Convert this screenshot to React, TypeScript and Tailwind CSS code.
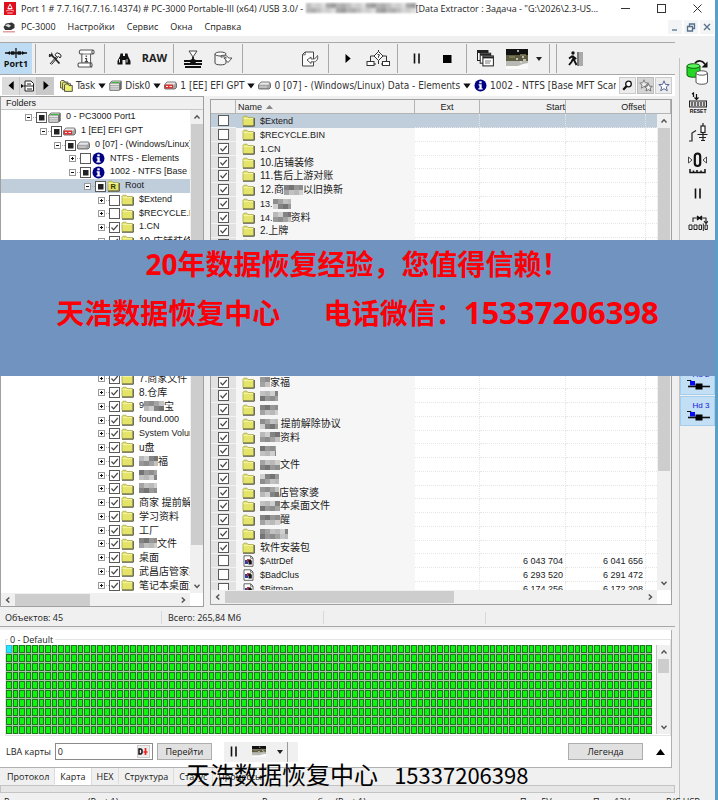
import { useEffect, useRef } from "react";
import type { ReactNode } from "react";
import clsx from "clsx";

type CheckState = "on" | "off" | "mixed";
type Part = string | number;

interface TreeNode {
  level: number;
  label: Part[];
  check: CheckState;
  icon: "drive" | "ee" | "disk" | "info" | "root" | "folder";
  open?: boolean;
  selected?: boolean;
}

interface FileRow {
  name: Part[];
  checked: boolean;
  kind: "folder" | "file";
  start?: string;
  offset?: string;
}

const INDENTS = ["pl-[24px]", "pl-[39px]", "pl-[53px]", "pl-[68px]", "pl-[83px]", "pl-[97px]"];

// A number inside a label is the width of a masked stretch
const folder = (...label: Part[]): TreeNode => ({ level: 5, label, check: "on", icon: "folder" });

const tree: TreeNode[] = [
  { level: 0, label: ["0 - PC3000 Port1"], check: "mixed", icon: "drive", open: true },
  { level: 1, label: ["1 [EE] EFI GPT"], check: "mixed", icon: "ee", open: true },
  { level: 2, label: ["0 [07] - (Windows/Linux) Data"], check: "mixed", icon: "disk", open: true },
  { level: 3, label: ["NTFS - Elements"], check: "off", icon: "info" },
  { level: 3, label: ["1002 - NTFS [Base MFT Scan]"], check: "mixed", icon: "info", open: true },
  { level: 4, label: ["Root"], check: "mixed", icon: "root", open: true, selected: true },
  { level: 5, label: ["$Extend"], check: "off", icon: "folder" },
  { level: 5, label: ["$RECYCLE.BIN"], check: "off", icon: "folder" },
  folder("1.CN"),
  folder("10.店铺装修"),
  folder("11.售后上游对账"),
  folder("12.商", 19, "以旧换新"),
  folder("13.", 18),
  folder("14.", 18, "资料"),
  folder("2.上牌"),
  folder("3.", 18),
  folder("4.", 18),
  folder("5.", 18),
  folder("6.", 18),
  folder("7.商家文件"),
  folder("8.仓库"),
  folder("9", 20, "宝"),
  folder("found.000"),
  folder("System Volume Information"),
  folder("u盘"),
  folder(19, "福"),
  folder(18),
  folder(18),
  folder("商家 提前解除协议"),
  folder("学习资料"),
  folder("工厂"),
  folder(18, "文件"),
  folder("桌面"),
  folder("武昌店管家婆"),
  folder("笔记本桌面文件"),
];

const dir = (...name: Part[]): FileRow => ({ name, checked: true, kind: "folder" });

const files: FileRow[] = [
  { name: ["$Extend"], checked: false, kind: "folder" },
  { name: ["$RECYCLE.BIN"], checked: false, kind: "folder" },
  dir("1.CN"),
  dir("10.店铺装修"),
  dir("11.售后上游对账"),
  dir("12.商", 19, "以旧换新"),
  dir("13.", 18),
  dir("14.", 18, "资料"),
  dir("2.上牌"),
  dir("3.", 18),
  dir("4.", 18),
  dir("5.", 18),
  dir("6.", 18),
  dir("7.商家文件"),
  dir("8.仓库"),
  dir("9", 20, "宝"),
  dir("found.000"),
  dir("System Volume Information"),
  dir("u盘"),
  dir(10, "家福"),
  dir(18),
  dir(18),
  dir(18, " 提前解除协议"),
  dir(20, "资料"),
  dir(16),
  dir(20, "文件"),
  dir(19),
  dir(19, "店管家婆"),
  dir(20, "本桌面文件"),
  dir(20, "醒"),
  dir(28),
  dir("软件安装包"),
  { name: ["$AttrDef"], checked: false, kind: "file", start: "6 043 704", offset: "6 041 656" },
  { name: ["$BadClus"], checked: false, kind: "file", start: "6 293 520", offset: "6 291 472" },
  { name: ["$Bitmap"], checked: false, kind: "file", start: "6 174 256", offset: "6 172 208" },
];

const SHADES = ["#8d8d8d", "#b9b9b9", "#747474", "#a3a3a3", "#cfcfcf", "#989898", "#c2c2c2", "#838383"];

function Mosaic({ width, seed = 0 }: { width: number; seed?: number }) {
  const cols = Math.ceil(width / 5);
  return (
    <svg width={width} height="11" viewBox={`0 0 ${width} 11`} className="shrink-0" aria-hidden="true">
      {Array.from({ length: cols * 2 }, (_, i) => (
        <rect
          key={i}
          x={(i % cols) * 5}
          y={Math.floor(i / cols) * 5}
          width="5"
          height="5"
          fill={SHADES[(i * 3 + seed) % SHADES.length]}
        />
      ))}
    </svg>
  );
}

const HAN = /[\u4e00-\u9fff]/;

function Label({ parts, seed }: { parts: Part[]; seed: number }) {
  return (
    <span className="flex items-center whitespace-pre">
      {parts.map((p, i) =>
        typeof p === "number" ? (
          <Mosaic key={i} width={p} seed={seed} />
        ) : (
          <span key={i} className={HAN.test(p) ? "text-[10px]" : "text-[9px]"}>{p}</span>
        )
      )}
    </span>
  );
}

function CheckBox({ state, label }: { state: CheckState; label: string }) {
  const ref = useRef<HTMLInputElement>(null);
  useEffect(() => {
    if (ref.current) ref.current.indeterminate = state === "mixed";
  }, [state]);

  return (
    <span className="grid h-[11px] w-[11px] shrink-0">
      <input
        ref={ref}
        type="checkbox"
        defaultChecked={state === "on"}
        aria-label={label}
        className="peer col-start-1 row-start-1 h-[11px] w-[11px] appearance-none border border-[#5a5a5a] bg-white"
      />
      <svg
        viewBox="0 0 11 11"
        className="pointer-events-none invisible col-start-1 row-start-1 h-[11px] w-[11px] peer-checked:visible"
      >
        <path d="M2.5 5.5 4.6 7.8 8.8 3" fill="none" stroke="#444" strokeWidth="1.2" />
      </svg>
      <svg
        viewBox="0 0 11 11"
        className="pointer-events-none invisible col-start-1 row-start-1 h-[11px] w-[11px] peer-indeterminate:visible"
      >
        <rect x="3" y="3" width="5.5" height="5.5" fill="#222" />
      </svg>
    </span>
  );
}

function FolderIcon({ root }: { root?: boolean }) {
  return (
    <svg width="13" height="12" viewBox="0 0 13 12" className="shrink-0">
      <path d="M1 10.5V2.2L2 1.2H5L6 2.5H11.5V10.5Z" fill="#e4e46a" stroke="#a8a850" strokeWidth=".8" />
      <path d="M1.5 3.6H11" stroke="#f8f8b4" strokeWidth=".8" />
      <path d="M1 11.2H12.3V3" fill="none" stroke="#4a4a30" strokeWidth="1" />
      {root && (
        <text x="3.6" y="9.3" fontSize="7.5" fontWeight="bold" fontFamily="Liberation Sans" fill="#333300">
          R
        </text>
      )}
    </svg>
  );
}

function DriveIcon({ kind }: { kind: "drive" | "ee" | "disk" }) {
  if (kind === "drive") {
    return (
      <svg width="13" height="11" viewBox="0 0 13 11" className="shrink-0">
        <path d="M3 1H12.2V9L10 10.3H.8V3Z" fill="#a8a8a8" stroke="#555" strokeWidth=".8" />
        <path d="M1.2 4.6H10M1.2 6.8H10M1.2 9H10" stroke="#eee" />
        <path d="M3.2 1.5H11.6L10.2 3.2H1.6Z" fill="#c8e4c8" />
        <path d="M2.4 2.6H10.6" stroke="#3cae3c" />
        <path d="M10.3 3.2V10L12.2 8.8V1.5Z" fill="#666" />
      </svg>
    );
  }
  return (
    <svg width="13" height="9" viewBox="0 0 13 9" className="shrink-0">
      <path d="M3 1H11.5L12.5 3V6.5L11 8H1L.5 7.5V4Z" fill="#a4a4a4" stroke="#555" strokeWidth=".8" />
      <path d="M3 1.4H11.5L10.4 3.8H1.2Z" fill="#e8e8e8" />
      {kind === "ee" ? (
        <rect x="1" y="3.5" width="8" height="4" fill="#d33" />
      ) : (
        <path d="M1.4 6H9" stroke="#ddd" />
      )}
      {kind === "ee" && <path d="M2 5.5H4M5.5 5.5H8" stroke="#fff" strokeWidth=".9" />}
    </svg>
  );
}

function InfoIcon() {
  return (
    <svg width="13" height="13" viewBox="0 0 13 13" className="shrink-0">
      <circle cx="6.5" cy="6.5" r="6" fill="#000084" />
      <rect x="5.3" y="2.3" width="2.4" height="2" fill="#fff" />
      <path d="M4.6 5.3H7.7V9.2H8.6V10.4H4.4V9.2H5.4V6.4H4.6Z" fill="#fff" />
    </svg>
  );
}

function FileIcon() {
  return (
    <svg width="13" height="12" viewBox="0 0 13 12" className="shrink-0">
      <path d="M2 .8H8.8L11 3V11.3H2Z" fill="#fff" stroke="#555" strokeWidth=".9" />
      <path d="M8.6 1V3.2H11" fill="none" stroke="#555" strokeWidth=".8" />
      <rect x="3" y="5" width="3" height="4" fill="#2c3ea8" />
      <rect x="5" y="4" width="2.4" height="3" fill="#c33" />
      <path d="M6.5 9.5V5L8.5 4.2 9.8 6V9.5Z" fill="#161616" />
    </svg>
  );
}

function Expander({ open }: { open?: boolean }) {
  return (
    <svg width="11" height="9" viewBox="0 0 11 9" className="shrink-0">
      <path d="M8 4.5H11" stroke="#aaa" strokeDasharray="1 1" />
      <rect x=".5" y="1.5" width="6" height="6" fill="#fff" stroke="#9a9a9a" />
      <path d={open ? "M2 4.5H5" : "M2 4.5H5M3.5 3V6"} stroke="#111" />
    </svg>
  );
}

function NodeIcon({ icon }: { icon: TreeNode["icon"] }) {
  if (icon === "info") return <InfoIcon />;
  if (icon === "folder" || icon === "root") return <FolderIcon root={icon === "root"} />;
  return <DriveIcon kind={icon} />;
}

function Caret() {
  return (
    <svg width="8" height="6" viewBox="0 0 8 6" className="shrink-0">
      <path d="M.3.6H7.7L4 5.4Z" fill="#111" />
    </svg>
  );
}

const CHEVRONS = {
  up: "M1.5 5.5 4 2.8 6.5 5.5",
  down: "M1.5 2.8 4 5.5 6.5 2.8",
  left: "M5.3 1.5 2.6 4 5.3 6.5",
  right: "M2.8 1.5 5.5 4 2.8 6.5",
};

function ScrollArrow({ to }: { to: keyof typeof CHEVRONS }) {
  return (
    <button type="button" aria-label={`Scroll ${to}`} className="grid h-[14px] w-[14px] shrink-0 place-items-center">
      <svg width="8" height="8" viewBox="0 0 8 8">
        <path d={CHEVRONS[to]} fill="none" stroke="#555" strokeWidth="1.5" />
      </svg>
    </button>
  );
}

function ToolButton({ label, children }: { label: string; children: ReactNode }) {
  return (
    <button
      type="button"
      aria-label={label}
      className="flex h-[30px] w-[31px] shrink-0 items-center justify-center"
    >
      {children}
    </button>
  );
}

function Separator() {
  return (
    <div className="flex h-[29px] w-[7px] shrink-0 justify-center">
      <div className="w-px bg-[#a8a8a8]" />
    </div>
  );
}

function PauseIcon() {
  return (
    <svg width="8" height="11" viewBox="0 0 8 11">
      <path d="M1.5.5V10.5M6 .5V10.5" stroke="#111" strokeWidth="1.6" />
    </svg>
  );
}

function PictureIcon({ className }: { className: string }) {
  return (
    <svg viewBox="0 0 22 20" className={className} preserveAspectRatio="none">
      <rect width="22" height="20" fill="#fafafa" />
      <rect width="22" height="6" fill="#111" />
      <rect y="6" width="22" height="6" fill="#5e5c40" />
      <path d="M0 12H22V14L17 15 12 17H0Z" fill="#b9b9b4" />
      <path d="M11 2H13M16 8H18M14 13H16M17 11H20M10 10H12" stroke="#ddd" strokeWidth="1.6" />
      <path d="M3 8H9M14 6H20" stroke="#85835c" strokeWidth="1.4" />
    </svg>
  );
}

function TitleBar() {
  return (
    <header className="flex h-[17px] items-center bg-white pl-1 text-[#222]">
      <svg width="12" height="13" viewBox="0 0 12 13" className="shrink-0">
        <rect width="12" height="13" fill="#e00f1e" />
        <path d="M3.8 6.5 6 2.2 8.2 6.5Z" fill="none" stroke="#fff" strokeWidth="1" />
        <path d="M2 9.2C4 7.5 8 7.5 10 9.2M3.3 11H8.7" fill="none" stroke="#ffc9cc" strokeWidth="1" />
      </svg>
      <h1 className="flex min-w-0 flex-1 items-center overflow-hidden pl-[5px] font-['Open_Sans',sans-serif] text-[9px] whitespace-pre">
        Port 1 # 7.7.16(7.7.16.14374) # PC-3000 Portable-III (x64) /USB 3.0/ -{" "}
        <span className="opacity-70 blur-[1px]">
          <Mosaic width={110} seed={3} />
        </span>
        {"  "}[Data Extractor : Задача - "G:\2026\2.3-US...
      </h1>
      <div className="flex">
        <button type="button" aria-label="Minimize" className="grid h-4 w-9 place-items-center">
          <svg width="9" height="9" viewBox="0 0 9 9"><path d="M0 4.5H9" stroke="#333" /></svg>
        </button>
        <button type="button" aria-label="Maximize" className="grid h-4 w-9 place-items-center">
          <svg width="9" height="9" viewBox="0 0 9 9"><rect x=".5" y=".5" width="8" height="8" fill="none" stroke="#333" /></svg>
        </button>
        <button type="button" aria-label="Close" className="grid h-4 w-9 place-items-center">
          <svg width="9" height="9" viewBox="0 0 9 9"><path d="M.5.5 8.5 8.5M8.5.5.5 8.5" stroke="#333" /></svg>
        </button>
      </div>
    </header>
  );
}

function MenuBar() {
  return (
    <nav className="flex h-[19px] items-center gap-3 bg-white pl-[3px] font-['Open_Sans',sans-serif] text-[9px] text-[#222]">
      <span className="flex items-center gap-[6px]">
        <svg width="12" height="12" viewBox="0 0 12 12">
          <path d="M.5 6 3 2.5 9 1.5 11.5 3.5V7L8 9H2Z" fill="#333" />
          <path d="M2 4.5 5 3 8 4.5 6 6.5Z" fill="#ddd" />
          <path d="M0 10.8H12" stroke="#d88" strokeWidth="1.2" />
        </svg>
        <button type="button">PC-3000</button>
      </span>
      <button type="button">Настройки</button>
      <button type="button">Сервис</button>
      <button type="button">Окна</button>
      <button type="button">Справка</button>
      <div className="ml-auto flex gap-[2px] pr-px">
        {["M2 8H7", "M1.5 4.5H6.5V9H1.5ZM3.5 4.5V2H8.5V6.5H6.5", "M2 2 8 8M8 2 2 8"].map((d) => (
          <button key={d} type="button" aria-label="Child window" className="grid h-[14px] w-[14px] place-items-center bg-[#f2f4f6]">
            <svg width="10" height="10" viewBox="0 0 10 10"><path d={d} fill="none" stroke="#56708c" strokeWidth="1.3" /></svg>
          </button>
        ))}
      </div>
    </nav>
  );
}

function Toolbar() {
  return (
    <div className="mt-[6px] flex h-[33px] items-center border-y border-[#a8a8a8]">
      <button
        type="button"
        className="flex h-[31px] w-8 shrink-0 flex-col items-center justify-center bg-[#bddcf4] font-['Open_Sans',sans-serif] text-[9px] leading-[11px] font-bold text-[#111]"
      >
        <svg width="22" height="10" viewBox="0 0 22 10">
          <path d="M0 5H22M11 0V10" stroke="#111" strokeWidth="1.3" />
          <path d="M2 5 5 3V7ZM20 5 17 3V7Z" fill="#111" />
          <rect x="6" y="3.3" width="3.5" height="3.4" fill="#111" />
          <rect x="12.5" y="3.3" width="3.5" height="3.4" fill="#111" />
        </svg>
        Port1
      </button>
      <Separator />
      <ToolButton label="Tools">
        <svg width="14" height="13" viewBox="0 0 14 13">
          <path d="M2 12 8.5 4.5M3.5 12.5 9.5 5.5" stroke="#222" />
          <path d="M7 2.5 9 .8 12 2 13.2 4 12 6 10.5 4.2 9 5.5Z" fill="#fff" stroke="#222" />
          <path d="M1 4.5 3.5 3 5.5 5 11.5 11.5" fill="none" stroke="#222" strokeWidth="1.8" />
          <path d="M1 2.2 2.8 3.2M3.6.6 4.2 3" stroke="#222" />
        </svg>
      </ToolButton>
      <ToolButton label="Script">
        <svg width="18" height="19" viewBox="0 0 18 19">
          <path d="M3.5 1H16C14.5 1.5 14.5 4.5 16 5H13.5V14M3.5 1C1.8 1.5 1.8 4.5 3.5 5H5V14M16 1C17.5 1.5 17.5 4.5 16 5" fill="#fff" stroke="#555" strokeWidth="1.1" />
          <path d="M5 5H13.5V14H5Z" fill="#fafafa" stroke="#555" strokeWidth=".8" />
          <path d="M2 14H14C12.8 15 12.8 17 14 18H2C.6 17 .6 15 2 14ZM14 14C15.5 15 15.5 17 14 18" fill="#fff" stroke="#555" strokeWidth="1.1" />
          <path d="M9.3 6.5V8M8 9.5H9.5V12.5M7.8 12.7H11" fill="none" stroke="#444" strokeWidth="1.2" />
        </svg>
      </ToolButton>
      <Separator />
      <ToolButton label="Find">
        <svg width="14" height="12" viewBox="0 0 14 12">
          <path d="M3.5.5H6V3H8V.5H10.5L11 3 13.5 8V11.5H8.5V7H5.5V11.5H.5V8L3 3Z" fill="#111" />
          <path d="M2.5 6V9.5M10 6V9.5" stroke="#ddd" />
        </svg>
      </ToolButton>
      <ToolButton label="Raw recovery">
        <span className="font-['Open_Sans',sans-serif] text-[11px] font-bold text-[#222]">RAW</span>
      </ToolButton>
      <Separator />
      <ToolButton label="Map">
        <svg width="18" height="18" viewBox="0 0 18 18">
          <path d="M5 1H13L9 7Z" fill="#fff" stroke="#444" />
          <path d="M9 7V10M0 11H6L9 9.5 12 11H18M0 14H18M1 17H17" fill="none" stroke="#111" strokeWidth="1.8" />
          <path d="M5 10H13L11 14H7Z" fill="#111" />
        </svg>
      </ToolButton>
      <ToolButton label="Image">
        <svg width="19" height="15" viewBox="0 0 19 15">
          <path d="M1 3V12C1 14.5 12 14.5 12 12V8" fill="#f5f5f5" stroke="#444" />
          <ellipse cx="6.5" cy="3" rx="5.5" ry="2" fill="#fff" stroke="#444" />
          <path d="M7 4.8C10 3.8 13 4 14.5 7H18L14 11.5 10 7H12.5C11.5 5.6 9 5.5 7 6.2Z" fill="#fff" stroke="#444" strokeWidth=".9" />
        </svg>
      </ToolButton>
      <Separator />
      <div className="w-12 shrink-0" />
      <ToolButton label="Export">
        <svg width="18" height="16" viewBox="0 0 18 16">
          <path d="M4 1H12.5V15H1.5V3.5Z" fill="#fafafa" stroke="#444" />
          <path d="M1.5 3.8H4.2V1" fill="none" stroke="#444" strokeWidth=".8" />
          <path d="M6 9 10 6V8H12.5C14.5 8 15.5 6 16.5 4.5 17.5 8 15.5 10.8 12.5 10.8H10V12.5Z" fill="#fff" stroke="#444" strokeWidth=".9" />
        </svg>
      </ToolButton>
      <Separator />
      <ToolButton label="Start">
        <svg width="6" height="9" viewBox="0 0 6 9"><path d="M.5 0 5.7 4.5.5 9Z" fill="#000" /></svg>
      </ToolButton>
      <ToolButton label="Algorithm">
        <svg width="25" height="17" viewBox="0 0 25 17">
          <path d="M12.5 1.5 17 6 12.5 10.5 8 6Z" fill="#fff" stroke="#333" />
          <path d="M12.5 0V2M8 6H4.5V11M17 6H20.5V11M7 14H10M15 14H18M12.5 14V10.5" fill="none" stroke="#333" />
          <rect x="1" y="11.5" width="7" height="4" fill="#fff" stroke="#333" />
          <rect x="16.5" y="11.5" width="7" height="4" fill="#fff" stroke="#333" />
          <path d="M11.5 4.5H13.2V6H12.5V7.8" fill="none" stroke="#333" strokeWidth=".9" />
        </svg>
      </ToolButton>
      <Separator />
      <ToolButton label="Pause"><PauseIcon /></ToolButton>
      <ToolButton label="Stop">
        <svg width="9" height="8" viewBox="0 0 9 8"><rect width="8.5" height="8" fill="#000" /></svg>
      </ToolButton>
      <Separator />
      <ToolButton label="Windows">
        <svg width="17" height="17" viewBox="0 0 17 17">
          {[0, 2.7, 5.4].map((o) => (
            <g key={o}>
              <rect x={0.5 + o} y={0.5 + o} width="10.5" height="10" fill="#fff" stroke="#222" />
              <path d={`M${0.5 + o} ${2 + o}H${11 + o}`} stroke="#222" strokeWidth="2" />
            </g>
          ))}
          <path d="M8 11H14M8 13H13" stroke="#555" strokeWidth=".8" />
        </svg>
      </ToolButton>
      <ToolButton label="View"><PictureIcon className="h-5 w-[22px]" /></ToolButton>
      <button type="button" aria-label="View options" className="grid h-[30px] w-[14px] shrink-0 place-items-center">
        <svg width="6" height="4" viewBox="0 0 6 4"><path d="M0 0H6L3 4Z" fill="#222" /></svg>
      </button>
      <Separator />
      <Separator />
      <ToolButton label="Exit">
        <svg width="16" height="16" viewBox="0 0 16 16">
          <circle cx="5" cy="2" r="1.7" fill="#111" />
          <path d="M4.5 4.5 6 9 8.5 14M5 8 3.5 11 1 14M4.5 5 1 7.5M5 5.5 8.2 8" stroke="#111" strokeWidth="1.9" />
          <path d="M10 1V15" stroke="#444" strokeWidth="1.4" />
          <rect x="11" y="1" width="4" height="14" fill="#aaa" />
        </svg>
      </ToolButton>
    </div>
  );
}

function Crumb({ icon, children, last }: { icon: ReactNode; children: ReactNode; last?: boolean }) {
  return (
    <button type="button" className={clsx("flex items-center gap-[3px]", last ? "min-w-0 overflow-hidden" : "shrink-0")}>
      {icon}
      <span className="whitespace-nowrap">{children}</span>
      {!last && <Caret />}
    </button>
  );
}

function PathBar() {
  return (
    <div className="flex h-[21px] items-center bg-white pr-[3px] pl-[2px]">
      <div className="flex shrink-0 bg-[#dcdcdc]">
        <button type="button" aria-label="Back" className="grid h-[18px] w-[17px] place-items-center">
          <svg width="6" height="9" viewBox="0 0 6 9"><path d="M5.7 0 .5 4.5 5.7 9Z" fill="#000" /></svg>
        </button>
        <button type="button" aria-label="History" className="grid h-[18px] w-[18px] place-items-center border-x border-[#c4c4c4]">
          <svg width="14" height="12" viewBox="0 0 14 12">
            <path d="M4 1H10L12.5 3.5V11H4Z" fill="#fff" stroke="#222" />
            <path d="M0 4 3 6 0 8Z" fill="#000" />
            <path d="M3 6H13M6 4H10M6 9H11" stroke="#222" strokeWidth="1.2" />
          </svg>
        </button>
        <button type="button" aria-label="Forward" className="grid h-[18px] w-[17px] place-items-center bg-[#c9c9c9]">
          <svg width="6" height="9" viewBox="0 0 6 9"><path d="M.5 0 5.7 4.5.5 9Z" fill="#000" /></svg>
        </button>
      </div>
      <div className="ml-[6px] flex min-w-0 flex-1 items-center gap-[3px] overflow-hidden font-['DejaVu_Sans_Condensed','DejaVu_Sans',sans-serif] text-[10px] text-[#333]">
        <Crumb
          icon={
            <svg width="13" height="12" viewBox="0 0 13 12" className="shrink-0">
              <path d="M.5 8V1.5L1.5.5H4L5 2H8V8Z" fill="#e4e46a" stroke="#555" strokeWidth=".9" />
              <path d="M2.5 9.7V3.2L3.5 2.2H6L7 3.7H10.5V9.7Z" fill="#e4e46a" stroke="#555" strokeWidth=".9" />
              <path d="M4.5 11.4V5L5.5 4H8L9 5.5H12.3V11.4Z" fill="#eeee70" stroke="#444" strokeWidth=".9" />
            </svg>
          }
        >
          Task
        </Crumb>
        <Crumb icon={<DriveIcon kind="drive" />}>Disk0</Crumb>
        <Crumb icon={<DriveIcon kind="ee" />}>1 [EE] EFI GPT</Crumb>
        <Crumb icon={<DriveIcon kind="disk" />}>0 [07] - (Windows/Linux) Data - Elements</Crumb>
        <Crumb icon={<InfoIcon />} last>1002 - NTFS [Base MFT Scan]</Crumb>
      </div>
      <div className="ml-[3px] flex shrink-0 gap-px">
        <button type="button" aria-label="Search" className="grid h-[17px] w-[17px] place-items-center border border-[#ccc] bg-[#ececec]">
          <svg width="11" height="11" viewBox="0 0 11 11">
            <circle cx="6.5" cy="4" r="2.8" fill="#fff" stroke="#111" strokeWidth="1.3" />
            <path d="M4.5 6.2 1.2 9.8" stroke="#111" strokeWidth="2.2" />
          </svg>
        </button>
        <button type="button" aria-label="Bookmarks" className="grid h-[17px] w-[17px] place-items-center border border-[#bbb] bg-[#d4d4d4]">
          <svg width="14" height="13" viewBox="0 0 14 13">
            <path d="M5 .8 6.2 3.8 9.3 4 6.9 6 7.7 9.2 5 7.5 2.3 9.2 3.1 6 .7 4 3.8 3.8Z" fill="#eee" stroke="#777" strokeWidth=".9" />
            <path d="M9.4 4.5 10.5 7.2 13.3 7.4 11.1 9.2 11.8 12 9.4 10.5 7 12 7.7 9.2 5.5 7.4 8.3 7.2Z" fill="#f5f5f5" stroke="#666" strokeWidth=".9" />
          </svg>
        </button>
        <button type="button" aria-label="Add bookmark" className="grid h-[17px] w-[17px] place-items-center border border-[#ccc] bg-[#ececec]">
          <svg width="12" height="12" viewBox="0 0 12 12">
            <path d="M6 .8 7.4 4.4 11.2 4.6 8.2 7 9.3 10.8 6 8.7 2.7 10.8 3.8 7 .8 4.6 4.6 4.4Z" fill="#fff" stroke="#5a6a9a" />
          </svg>
        </button>
      </div>
    </div>
  );
}

function FolderTree() {
  return (
    <section className="flex w-[204px] shrink-0 flex-col border border-[#a0a0a0] bg-white">
      <h2 className="h-[13px] shrink-0 border-b border-[#c8c8c8] bg-[#f0f0f0] pl-[5px] leading-[13px]">Folders</h2>
      <div className="flex min-h-0 flex-1">
        <ul className="min-w-0 flex-1 overflow-hidden">
          {tree.map((node, i) => (
            <li
              key={i}
              className={clsx(
                "flex h-[14px] items-center nth-[4n]:h-[13px]",
                INDENTS[node.level],
                node.selected && "bg-[#c0cddb]"
              )}
            >
              <Expander open={node.open} />
              <CheckBox state={node.check} label={node.label.join("")} />
              <span className="mr-[5px] ml-px flex w-[13px] shrink-0 justify-center">
                <NodeIcon icon={node.icon} />
              </span>
              <Label parts={node.label} seed={i} />
            </li>
          ))}
        </ul>
        <div className="flex w-[13px] shrink-0 flex-col items-center bg-[#f0f0f0]">
          <ScrollArrow to="up" />
          <div className="w-3 flex-[415] bg-[#cdcdcd]" />
          <div className="flex-[34]" />
          <ScrollArrow to="down" />
        </div>
      </div>
      <div className="mr-[13px] flex h-[13px] shrink-0 items-center bg-[#f0f0f0]">
        <ScrollArrow to="left" />
        <div className="h-3 flex-[75] bg-[#cdcdcd]" />
        <div className="flex-[87]" />
        <ScrollArrow to="right" />
      </div>
    </section>
  );
}

function FileTable() {
  const cell = "border-r border-b border-dotted border-[#e6e6e6] p-0";
  const head = "h-[14px] border-r border-b border-[#b4b4b4] p-0 font-normal";
  return (
    <section className="flex min-w-0 flex-1 flex-col border border-[#a0a0a0] bg-white">
      <div className="relative min-h-0 flex-1 overflow-hidden">
        <table className="w-full table-fixed border-separate border-spacing-0 leading-[12px]">
          <colgroup>
            <col className="w-[25px]" />
            <col className="w-[179px]" />
            <col className="w-[65px]" />
            <col className="w-[86px]" />
            <col className="w-[80px]" />
            <col />
          </colgroup>
          <thead className="bg-[#f0f0f0]">
            <tr>
              <th className={head} aria-label="Selected" />
              <th className={clsx(head, "pl-[2px] text-left")}>
                Name{" "}
                <svg width="7" height="4" viewBox="0 0 7 4" className="ml-px inline-block align-middle">
                  <path d="M0 4 3.5 0 7 4Z" fill="#888" />
                </svg>
              </th>
              <th className={clsx(head, "text-center")}>Ext</th>
              <th className={clsx(head, "text-right")}>Start</th>
              <th className={clsx(head, "text-right")}>Offset</th>
              <th className={head} aria-label="More" />
            </tr>
          </thead>
          <tbody>
            {files.map((f, i) => {
              const selected = i === 0;
              return (
                <tr key={i} className={clsx("h-[14px] nth-[4n]:h-[13px]", selected && "bg-[#c0cddb]")}>
                  <td className={clsx("border-b border-[#f2f2f2] p-0", !selected && "bg-[#e2e2e2]")}>
                    <div className="flex h-3 items-center justify-center">
                      <CheckBox state={f.checked ? "on" : "off"} label={f.name.join("")} />
                    </div>
                  </td>
                  <td className={clsx("p-0", !selected && "bg-[#f6f6f6]")}>
                    <div className="flex h-3 items-center gap-[5px] pl-[6px]">
                      {f.kind === "folder" ? <FolderIcon /> : <FileIcon />}
                      <Label parts={f.name} seed={i + 2} />
                    </div>
                  </td>
                  <td className={cell} />
                  <td className={clsx(cell, "pr-[2px] text-right")}>{f.start}</td>
                  <td className={clsx(cell, "pr-[2px] text-right")}>{f.offset}</td>
                  <td className={cell} />
                </tr>
              );
            })}
          </tbody>
        </table>
        <div className="absolute top-[14px] right-0 bottom-0 flex w-[14px] flex-col bg-[#f0f0f0]">
          <ScrollArrow to="up" />
          <div className="mx-px flex-[343] bg-[#cdcdcd]" />
          <div className="flex-[105]" />
          <ScrollArrow to="down" />
        </div>
      </div>
      <div className="mr-[14px] flex h-[14px] shrink-0 items-center bg-[#f0f0f0]">
        <ScrollArrow to="left" />
        <div className="h-3 flex-[228] bg-[#cdcdcd]" />
        <div className="flex-[188]" />
        <ScrollArrow to="right" />
      </div>
    </section>
  );
}

function SectorMap() {
  return (
    <fieldset className="ml-[5px] flex min-w-0 border border-[#e4e4e4] pb-px">
      <legend className="ml-[2px] px-[2px] font-['Open_Sans',sans-serif] leading-[11px]">0 - Default</legend>
      <div className="grid h-[89px] min-w-0 flex-1 grid-cols-[repeat(99,minmax(0,1fr))] grid-rows-10 gap-px bg-[#a9c4a9]">
        {Array.from({ length: 990 }, (_, i) => (
          <div
            key={i}
            className={clsx("border", i === 0 ? "border-[#30b8d8] bg-[#20e8ff]" : "border-[#1c7a1c] bg-[#0cf50c]")}
          />
        ))}
      </div>
      <div className="ml-1 flex w-[14px] shrink-0 flex-col border-l border-[#c4c4c4] bg-[#f0f0f0]">
        <ScrollArrow to="up" />
        <div className="mx-px h-[14px] bg-[#cdcdcd]" />
        <div className="flex-1" />
        <ScrollArrow to="down" />
      </div>
    </fieldset>
  );
}

function MapControls() {
  const button = "h-[17px] border border-[#adadad] bg-[#e1e1e1] leading-[15px]";
  return (
    <div className="flex h-[31px] items-center pr-[6px] pl-[6px] font-['Open_Sans',sans-serif]">
      <label htmlFor="lba" className="mr-1">LBA карты</label>
      <div className="flex h-[17px] w-[98px] items-center border border-[#8a8a8a] bg-white px-[2px]">
        <input id="lba" defaultValue="0" className="w-0 flex-1 outline-none" />
        <button type="button" aria-label="Decimal" className="grid h-[13px] w-[13px] place-items-center border border-[#ccc] bg-[#eee]">
          <svg width="10" height="7" viewBox="0 0 10 7">
            <path d="M1 1H2.5C4.6 1 4.6 6 2.5 6H1Z" fill="none" stroke="#111" strokeWidth="1.5" />
            <path d="M7.5 0V7M5.5 4H9.5" stroke="#e22" strokeWidth="1.7" />
          </svg>
        </button>
      </div>
      <button type="button" className={clsx(button, "ml-1 w-[55px]")}>Перейти</button>
      <div className="ml-3 flex h-5 items-center bg-[#f0f0f0]">
        <button type="button" aria-label="Pause map" className="grid w-[20px] place-items-center"><PauseIcon /></button>
        <button type="button" aria-label="Map view" className="grid w-[30px] place-items-center">
          <PictureIcon className="h-[11px] w-[14px]" />
        </button>
        <button type="button" aria-label="Map options" className="grid w-[13px] place-items-center">
          <svg width="6" height="4" viewBox="0 0 6 4"><path d="M0 0H6L3 4Z" fill="#222" /></svg>
        </button>
        <div className="mr-[10px] h-5 w-px bg-[#999]" />
      </div>
      <button type="button" className={clsx(button, "ml-auto w-[75px]")}>Легенда</button>
      <button type="button" aria-label="Collapse" className="ml-3 grid h-[17px] w-[10px] place-items-center">
        <svg width="9" height="6" viewBox="0 0 9 6"><path d="M0 6 4.5 0 9 6Z" fill="#000" /></svg>
      </button>
    </div>
  );
}

const TABS = ["Протокол", "Карта", "HEX", "Структура", "Статус", "Процессы"];

function Tabs() {
  return (
    <div role="tablist" className="flex h-[17px] pl-[2px] font-['Open_Sans',sans-serif]">
      {TABS.map((t) => (
        <button
          key={t}
          type="button"
          role="tab"
          aria-selected={t === "Карта"}
          className={clsx(
            "border-r border-[#dcdcdc] px-[5px]",
            t === "Карта" ? "bg-white leading-[17px]" : "mb-px leading-[15px]"
          )}
        >
          {t}
        </button>
      ))}
    </div>
  );
}

function HdIcon({ n }: { n: number }) {
  return (
    <span className="flex flex-col items-end">
      <span className="text-[8px] leading-[9px] text-[#1515dd]">Hd {n}</span>
      <svg width="24" height="11" viewBox="0 0 24 11">
        <path d="M1 1.5H5V3" fill="none" stroke="#111" />
        <rect x="4" y="2" width="5" height="4.5" fill="#0a0af0" />
        <path d="M2 7.5H24" stroke="#111" strokeWidth="1.6" />
        <rect x="9.5" y="4.5" width="7" height="6" fill="#000" />
      </svg>
    </span>
  );
}

function SideBar() {
  return (
    <aside className="mt-[22px] flex w-[36px] shrink-0 flex-col items-center self-stretch border-l border-[#c4c4c4]">
      <ToolButton label="Databases">
        <svg width="23" height="26" viewBox="0 0 23 26">
          <path d="M1 6V15C1 18 14 18 14 15V6" fill="#22d822" stroke="#0c600c" />
          <ellipse cx="7.5" cy="6" rx="6.5" ry="2.3" fill="#5cf55c" stroke="#0c600c" />
          <path d="M10 13V22C10 25 21.5 25 21.5 22V13" fill="#fff" stroke="#555" />
          <ellipse cx="15.7" cy="13" rx="5.7" ry="2.2" fill="#fff" stroke="#555" />
          <path d="M9 3C12 0 17 0 19 4.5" fill="none" stroke="#111" strokeWidth="1.6" />
          <path d="M21.5 1.5V7.5H15.5Z" fill="#111" />
        </svg>
      </ToolButton>
      <ToolButton label="Reset">
        <svg width="20" height="22" viewBox="0 0 20 22">
          <path d="M4 2 5.5 1V5M8.5 2V7M6.5 5.5 8.5 7.5 10.5 5.5" fill="none" stroke="#111" strokeWidth="1.2" />
          <rect x="1.5" y="9" width="17" height="6" fill="#ddd" stroke="#222" />
          <path d="M4 10V14M7 10V14M10 10V14M13 10V14M16 10V14" stroke="#222" strokeWidth="1.2" />
          <text x="1.8" y="21.3" fontSize="5" fontWeight="bold" fontFamily="Liberation Sans" fill="#111">RESET</text>
        </svg>
      </ToolButton>
      <ToolButton label="Power">
        <svg width="20" height="20" viewBox="0 0 20 20">
          <path d="M1 18H4V10L8 7.5M15 0V3M15 9V18M9.5 11.5H19.5M11 14.5H18M13 17.5H17" fill="none" stroke="#222" strokeWidth="1.2" />
          <rect x="13" y="3" width="4" height="6.5" fill="#fff" stroke="#222" strokeWidth="1.2" />
        </svg>
      </ToolButton>
      <ToolButton label="Recalibrate">
        <svg width="21" height="22" viewBox="0 0 21 22">
          <path d="M1.5 5 5 8 1.5 11ZM19.5 5 16 8 19.5 11Z" fill="#fff" stroke="#333" strokeWidth=".9" />
          <rect x="7.8" y="1.5" width="5.4" height="12.5" rx="2.7" fill="none" stroke="#111" strokeWidth="2.2" />
          <path d="M3 17V20.5H18V17M6.5 18.5V20M10 18V20M14 18.5V20" fill="none" stroke="#111" strokeWidth="1.5" />
        </svg>
      </ToolButton>
      <ToolButton label="Pause drive"><PauseIcon /></ToolButton>
      <ToolButton label="Passport">
        <svg width="20" height="16" viewBox="0 0 20 16">
          <path d="M5 7V3H9M14 3H18V8M16 6 18 8.5 20 6" fill="none" stroke="#222" strokeWidth="1.1" />
          <path d="M9 1 14 5M14 1 9 5M9 3H14" stroke="#111" strokeWidth="1.5" />
          <path d="M1 10H4V14.5H1ZM6 10H9V14.5H6ZM11 10H13.5V14.5H11ZM15.3 8.5V16M17 10H19.3V14.5H17Z" fill="none" stroke="#222" />
        </svg>
      </ToolButton>
      <ToolButton label="Pause port"><PauseIcon /></ToolButton>
      <ToolButton label="Stop port"><PauseIcon /></ToolButton>
      <div className="mt-[5px] flex flex-col gap-px self-stretch">
        {[0, 1, 2, 3].map((n) => (
          <button key={n} type="button" className="flex h-[30px] items-center justify-center border border-[#a5cdec] bg-[#c2dff5]">
            <HdIcon n={n} />
          </button>
        ))}
      </div>
    </aside>
  );
}

export default function App() {
  return (
    <div className="relative flex h-screen flex-col overflow-hidden border-r-[3px] border-[#5a9fc8] bg-[#f0f0f0] font-['Liberation_Sans','Noto_Sans_CJK_SC',sans-serif] text-[9px] text-[#1a1a1a]">
      <TitleBar />
      <MenuBar />
      <div className="flex min-h-0 flex-1">
        <div className="mr-1 flex min-w-0 flex-1 flex-col">
          <Toolbar />
          <PathBar />
          <main className="flex min-h-0 flex-1 gap-[6px] pr-[3px]">
            <FolderTree />
            <div className="flex min-w-0 flex-1 pt-[3px] pb-[2px]">
              <FileTable />
            </div>
          </main>

          {/* Totals */}
          <div className="mt-[2px] flex h-[18px] shrink-0 items-center border-b border-[#a8a8a8] font-['Open_Sans',sans-serif]">
            <span className="w-[162px] border-r border-[#d8d8d8] pl-[5px]">Объектов: 45</span>
            <span className="w-[162px] border-r border-[#d8d8d8] pl-[6px]">Всего: 265,84 Мб</span>
            <span className="h-3 w-[162px] border-r border-[#d8d8d8]" />
          </div>

          <section className="mt-[3px] mr-[3px] shrink-0 border-r border-b border-[#b0b0b0] bg-white pt-1">
            <SectorMap />
            <MapControls />
          </section>
          <Tabs />
          <div className="mb-[7px] h-[8px] shrink-0 border border-[#c4c4c4] bg-[#e6e6e6]" />
        </div>
        <SideBar />
      </div>

      {/* Register status line, runs off the bottom edge of the window */}
      <footer className="-mt-1 flex h-1 shrink-0 overflow-hidden pl-1 font-['Open_Sans',sans-serif] leading-[12px] whitespace-nowrap">
        <span className="w-[258px]">Регистр состояния (Port 1)</span>
        <span className="w-[258px]">Регистр ошибок (Port 1)</span>
        <span className="w-[73px]">Пит. 5V</span>
        <span className="w-[73px]">Пит. 12V</span>
        <span>R/C USB</span>
      </footer>

      <div className="absolute inset-x-0 top-[240px] flex h-[136px] flex-col items-center bg-[#7093bf] font-['Open_Sans','Noto_Sans_CJK_SC',sans-serif] text-[28px] leading-[48px] font-bold whitespace-pre text-[#fb0007]">
        <p>20年数据恢复经验，您值得信赖！</p>
        <p>
          天浩数据恢复中心{"      "}电话微信：<span className="text-[31px]">15337206398</span>
        </p>
      </div>

      <p className="absolute top-[762px] left-[186px] font-['Noto_Sans_CJK_SC',sans-serif] text-[24px] leading-6 whitespace-pre text-black">
        天浩数据恢复中心{"   "}<span className="text-[22px]">15337206398</span>
      </p>
    </div>
  );
}
